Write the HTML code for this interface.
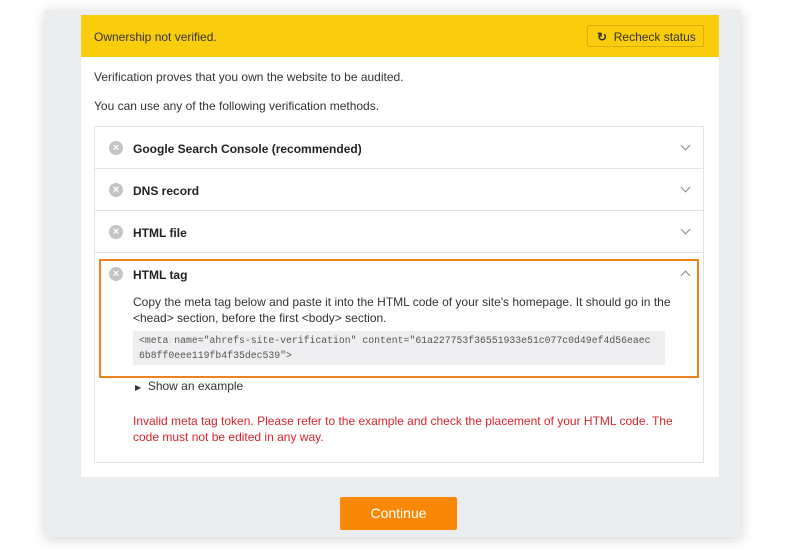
<!DOCTYPE html>
<html><head><style>
*{box-sizing:border-box;margin:0;padding:0}
body{width:786px;height:557px;background:#fff;font-family:"Liberation Sans",sans-serif;position:relative;overflow:hidden}
.panel{position:absolute;left:45px;top:10px;width:696px;height:527px;background:#ebecee;box-shadow:0 2px 12px rgba(0,0,0,.18)}
.card{position:absolute;left:81px;top:15px;width:638px;height:462px;background:#fff}
.bar{height:42px;background:#f9cd0b;position:relative;font-size:12px;color:#333;padding:15px 0 0 13px}
.btn{position:absolute;right:15px;top:10px;width:117px;height:22px;border:1px solid #d9ae0a;border-radius:2px;font-size:12px;color:#333;padding:4px 0 0 9px}
.p{position:absolute;left:13px;font-size:12px;color:#333}
.acc{position:absolute;left:13px;top:111px;width:610px;height:337px;border:1px solid #e3e3e3}
.row{height:42px;border-bottom:1px solid #e3e3e3;position:relative}
.ic{position:absolute;left:14px;top:14px;width:14px;height:14px;border-radius:50%;background:#c4c4c4;color:#fff;font-size:11px;line-height:14px;text-align:center;font-weight:bold}
.t{position:absolute;left:38px;top:15px;font-size:12px;font-weight:bold;color:#222}
.ch{position:absolute;right:14px;top:15px;width:7px;height:7px;border-right:1.3px solid #888;border-bottom:1.3px solid #888;transform:rotate(45deg)}
.up{transform:rotate(-135deg);top:19px}
.hl{position:absolute;border:2px solid #f0821e}
.cont{position:absolute;left:340px;top:497px;width:117px;height:33px;background:#fb8805;border-radius:2px;color:#fff;font-size:14px;text-align:center;line-height:33px}
</style></head><body>
<div class="panel"></div>
<div class="card">
<div class="bar">Ownership not verified.<div class="btn"><b style="font-size:12px">&#x21bb;</b>&nbsp; Recheck status</div></div>
<div class="p" style="top:55px">Verification proves that you own the website to be audited.</div>
<div class="p" style="top:84px">You can use any of the following verification methods.</div>
<div class="acc">
<div class="row"><div class="ic">×</div><div class="t">Google Search Console (recommended)</div><div class="ch"></div></div>
<div class="row"><div class="ic">×</div><div class="t">DNS record</div><div class="ch"></div></div>
<div class="row"><div class="ic">×</div><div class="t">HTML file</div><div class="ch"></div></div>
<div style="position:relative">
<div class="ic">×</div><div class="t">HTML tag</div><div class="ch up"></div>
<div style="position:absolute;left:38px;top:41px;width:545px;font-size:12px;line-height:16px;color:#333">Copy the meta tag below and paste it into the HTML code of your site's homepage. It should go in the &lt;head&gt; section, before the first &lt;body&gt; section.</div>
<div style="position:absolute;left:38px;top:78px;width:532px;height:34px;background:#eeeef0;font-family:'Liberation Mono',monospace;font-size:9.8px;line-height:15px;color:#555;padding:2px 6px;white-space:nowrap;overflow:hidden">&lt;meta name="ahrefs-site-verification" content="61a227753f36551933e51c077c0d49ef4d56eaec<br>6b8ff0eee119fb4f35dec539"&gt;</div>
<div style="position:absolute;left:40px;top:126px;font-size:12px;color:#333"><span style="font-size:8px">&#9654;</span>&nbsp; Show an example</div>
<div style="position:absolute;left:38px;top:160px;width:550px;font-size:12px;line-height:16px;color:#d8262e">Invalid meta tag token. Please refer to the example and check the placement of your HTML code. The code must not be edited in any way.</div>
</div>
</div>
<div class="hl" style="left:18px;top:244px;width:600px;height:119px"></div>
</div>
<div class="cont">Continue</div>
</body></html>
